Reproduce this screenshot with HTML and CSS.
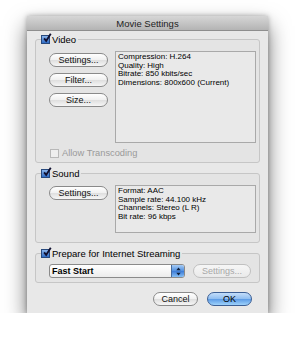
FILE: index.html
```html
<!DOCTYPE html>
<html lang="en">
<head>
    <meta charset="UTF-8">
    <title>Movie Settings</title>
    <link rel="stylesheet" href="styles.css">
</head>
<body>
    <div class="window">
        <div class="titlebar">Movie Settings</div>
        <div class="content">

            <fieldset class="group">
                <legend class="group-label">
                    <span class="check on"><svg viewBox="0 0 12 12"><path d="M2.5 6.5 L5 9.5 L10.5 1" /></svg></span>
                    Video
                </legend>
                <div class="group-row video-row">
                    <div class="button-col">
                        <button class="btn">Settings...</button>
                        <button class="btn">Filter...</button>
                        <button class="btn">Size...</button>
                    </div>
                    <div class="info video-info">
                        Compression: H.264<br>
                        Quality: High<br>
                        Bitrate: 850 kbits/sec<br>
                        Dimensions: 800x600 (Current)
                    </div>
                </div>
                <div class="transcode">
                    <span class="check off"></span>
                    Allow Transcoding
                </div>
            </fieldset>

            <fieldset class="group">
                <legend class="group-label">
                    <span class="check on"><svg viewBox="0 0 12 12"><path d="M2.5 6.5 L5 9.5 L10.5 1" /></svg></span>
                    Sound
                </legend>
                <div class="group-row sound-row">
                    <div class="button-col">
                        <button class="btn">Settings...</button>
                    </div>
                    <div class="info sound-info">
                        Format: AAC<br>
                        Sample rate: 44.100 kHz<br>
                        Channels: Stereo (L R)<br>
                        Bit rate: 96 kbps
                    </div>
                </div>
            </fieldset>

            <fieldset class="group">
                <legend class="group-label">
                    <span class="check on"><svg viewBox="0 0 12 12"><path d="M2.5 6.5 L5 9.5 L10.5 1" /></svg></span>
                    Prepare for Internet Streaming
                </legend>
                <div class="stream-row">
                    <div class="popup">
                        <span class="popup-text">Fast Start</span>
                        <span class="popup-arrows">
                            <svg viewBox="0 0 8 12"><path d="M4 1.5 L6.5 4.5 L1.5 4.5 Z M4 10.5 L6.5 7.5 L1.5 7.5 Z" /></svg>
                        </span>
                    </div>
                    <button class="btn disabled">Settings...</button>
                </div>
            </fieldset>

            <div class="footer">
                <button class="btn small">Cancel</button>
                <button class="btn small default">OK</button>
            </div>
        </div>
    </div>
</body>
</html>
```

FILE: styles.css
```css
body {
    margin: 0;
    background-color: #ffffff;
    font-family: 'Liberation Sans', Arial, sans-serif;
    color: #000000;
}

.window {
    width: 241px;
    height: 297px;
    margin: 16px 0 0 27px;
    background-color: #e8e8e8;
    box-shadow: 0 10px 20px rgba(0, 0, 0, 0.55), 0 0 5px rgba(0, 0, 0, 0.3);
    display: flex;
    flex-direction: column;
}

.titlebar {
    height: 14px;
    line-height: 15px;
    text-align: center;
    font-size: 9.5px;
    color: #1e1e1e;
    background: linear-gradient(#d6d6d6, #b4b4b4);
    border-bottom: 1px solid #8e8e8e;
}

.content {
    padding: 3px 8px 0 8px;
}

.group {
    margin: 0 0 5px 0;
    padding: 0;
    border: 1px solid #c6c6c6;
    border-radius: 3px;
    background-color: #e4e4e4;
    min-width: 0;
}

.group-label {
    display: flex;
    align-items: center;
    gap: 2px;
    height: 11px;
    margin-left: 5px;
    padding: 0 2px 0 0;
    font-size: 9.5px;
}

.check {
    display: inline-block;
    width: 9px;
    height: 9px;
    box-sizing: border-box;
    position: relative;
}

.check.on {
    background: linear-gradient(#8ab4ea, #2f6cc6);
    border: 1px solid #27497d;
}

.check.on svg {
    position: absolute;
    left: 0;
    top: -3px;
    width: 10px;
    height: 10px;
    fill: none;
    stroke: #101030;
    stroke-width: 2.2;
}

.check.off {
    background-color: #eeeeee;
    border: 1px solid #b8b8b8;
}

.group-row {
    display: flex;
    align-items: flex-start;
    padding: 0 3px 0 13px;
}

.video-row {
    padding-top: 6px;
}

.sound-row {
    padding-top: 6px;
    padding-bottom: 9px;
}

.button-col {
    display: flex;
    flex-direction: column;
    gap: 6px;
    margin-top: 2px;
}

.sound-row .button-col {
    margin-top: 1px;
}

.btn {
    width: 59px;
    height: 14px;
    padding: 0;
    font-family: 'Liberation Sans', Arial, sans-serif;
    font-size: 9px;
    line-height: 12px;
    color: #111111;
    background: linear-gradient(#ffffff, #f0f0f0 50%, #dedede 51%, #f6f6f6);
    border: 1px solid #8a8a8a;
    border-radius: 7px;
}

.btn.disabled {
    width: 58px;
    color: #a8a8a8;
    border-color: #c0c0c0;
    background: linear-gradient(#f6f6f6, #eaeaea);
}

.btn.small {
    width: 45px;
}

.btn.default {
    color: #000000;
    border-color: #3c5f95;
    background: linear-gradient(#c4defa, #8ebdf0 50%, #5b9ae6 51%, #9ed2fb);
}

.info {
    margin-left: auto;
    width: 141px;
    box-sizing: border-box;
    padding: 1px 2px;
    font-size: 8px;
    line-height: 8.7px;
    background-color: #e9e9e9;
    border: 1px solid #a9a9a9;
}

.video-info {
    height: 92px;
}

.sound-info {
    height: 48px;
}

.transcode {
    display: flex;
    align-items: center;
    gap: 3px;
    height: 10px;
    margin: 5px 0 4px 14px;
    font-size: 9.3px;
    color: #9a9a9a;
}

.stream-row {
    display: flex;
    align-items: center;
    gap: 8px;
    padding: 5px 0 4px 13px;
}

.popup {
    display: flex;
    width: 136px;
    height: 14px;
    box-sizing: border-box;
    border: 1px solid #8a8a8a;
    border-radius: 3px;
    background: linear-gradient(#ffffff, #ececec);
    overflow: hidden;
}

.popup-text {
    flex: 1;
    padding-left: 2px;
    font-size: 9px;
    font-weight: bold;
    line-height: 12px;
}

.popup-arrows {
    width: 12px;
    display: flex;
    align-items: center;
    justify-content: center;
    background: linear-gradient(#a6cbf5, #4f8fe0 50%, #3b7ad6 51%, #86bff5);
    border-left: 1px solid #456a9e;
}

.popup-arrows svg {
    width: 7px;
    height: 11px;
    fill: #10203a;
}

.footer {
    display: flex;
    justify-content: flex-end;
    gap: 9px;
    margin-top: 9px;
    padding-right: 8px;
}
```
